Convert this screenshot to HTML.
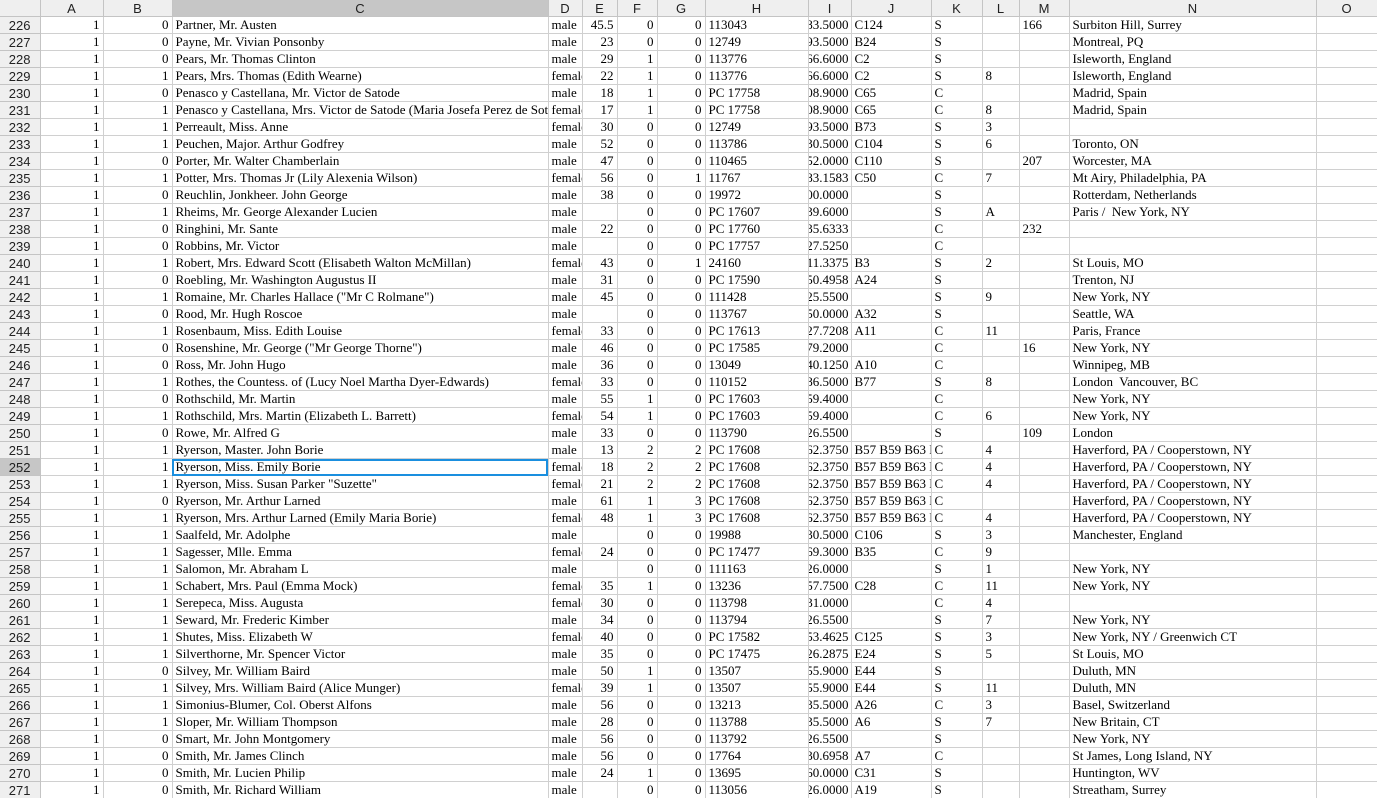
<!DOCTYPE html>
<html><head><meta charset="utf-8"><style>
html,body{margin:0;padding:0;background:#fff;width:1377px;height:798px;overflow:hidden}
table{border-collapse:collapse;table-layout:fixed;width:1377px}
td,th{height:16px;padding:0 3px;border-right:1px solid #d0d0d0;border-bottom:1px solid #d0d0d0;white-space:nowrap;overflow:hidden;line-height:16px}
td{font:13px "Liberation Serif",serif;color:#000}
th{font:13px "Liberation Sans",sans-serif;background:#efefef;color:#222;font-weight:normal;text-align:center;border-color:#c4c4c4}
tbody th{text-align:right;padding-right:9px}
td.r{text-align:right}
td.i{padding:0 2px 0 0}
td.i p{margin:0;display:flex;justify-content:flex-end;overflow:hidden}
th.s{background:#c6c6c6}
td.sel{outline:2px solid #1a8fdf;outline-offset:-2px}
</style></head><body>
<table>
<colgroup><col style="width:40px"><col style="width:63px"><col style="width:69px"><col style="width:376px"><col style="width:34px"><col style="width:35px"><col style="width:40px"><col style="width:48px"><col style="width:103px"><col style="width:43px"><col style="width:80px"><col style="width:51px"><col style="width:37px"><col style="width:50px"><col style="width:247px"><col style="width:61px"></colgroup>
<thead><tr><th></th><th>A</th><th>B</th><th class="s">C</th><th>D</th><th>E</th><th>F</th><th>G</th><th>H</th><th>I</th><th>J</th><th>K</th><th>L</th><th>M</th><th>N</th><th>O</th></tr></thead>
<tbody>
<tr><th>226<td class=r>1<td class=r>0<td>Partner, Mr. Austen<td>male<td class=r>45.5<td class=r>0<td class=r>0<td>113043<td class=i><p>83.5000</p><td>C124<td>S<td><td>166<td>Surbiton Hill, Surrey<td></tr>
<tr><th>227<td class=r>1<td class=r>0<td>Payne, Mr. Vivian Ponsonby<td>male<td class=r>23<td class=r>0<td class=r>0<td>12749<td class=i><p>93.5000</p><td>B24<td>S<td><td><td>Montreal, PQ<td></tr>
<tr><th>228<td class=r>1<td class=r>0<td>Pears, Mr. Thomas Clinton<td>male<td class=r>29<td class=r>1<td class=r>0<td>113776<td class=i><p>66.6000</p><td>C2<td>S<td><td><td>Isleworth, England<td></tr>
<tr><th>229<td class=r>1<td class=r>1<td>Pears, Mrs. Thomas (Edith Wearne)<td>female<td class=r>22<td class=r>1<td class=r>0<td>113776<td class=i><p>66.6000</p><td>C2<td>S<td>8<td><td>Isleworth, England<td></tr>
<tr><th>230<td class=r>1<td class=r>0<td>Penasco y Castellana, Mr. Victor de Satode<td>male<td class=r>18<td class=r>1<td class=r>0<td>PC 17758<td class=i><p>08.9000</p><td>C65<td>C<td><td><td>Madrid, Spain<td></tr>
<tr><th>231<td class=r>1<td class=r>1<td>Penasco y Castellana, Mrs. Victor de Satode (Maria Josefa Perez de Soto y Vallejo)<td>female<td class=r>17<td class=r>1<td class=r>0<td>PC 17758<td class=i><p>08.9000</p><td>C65<td>C<td>8<td><td>Madrid, Spain<td></tr>
<tr><th>232<td class=r>1<td class=r>1<td>Perreault, Miss. Anne<td>female<td class=r>30<td class=r>0<td class=r>0<td>12749<td class=i><p>93.5000</p><td>B73<td>S<td>3<td><td><td></tr>
<tr><th>233<td class=r>1<td class=r>1<td>Peuchen, Major. Arthur Godfrey<td>male<td class=r>52<td class=r>0<td class=r>0<td>113786<td class=i><p>30.5000</p><td>C104<td>S<td>6<td><td>Toronto, ON<td></tr>
<tr><th>234<td class=r>1<td class=r>0<td>Porter, Mr. Walter Chamberlain<td>male<td class=r>47<td class=r>0<td class=r>0<td>110465<td class=i><p>52.0000</p><td>C110<td>S<td><td>207<td>Worcester, MA<td></tr>
<tr><th>235<td class=r>1<td class=r>1<td>Potter, Mrs. Thomas Jr (Lily Alexenia Wilson)<td>female<td class=r>56<td class=r>0<td class=r>1<td>11767<td class=i><p>83.1583</p><td>C50<td>C<td>7<td><td>Mt Airy, Philadelphia, PA<td></tr>
<tr><th>236<td class=r>1<td class=r>0<td>Reuchlin, Jonkheer. John George<td>male<td class=r>38<td class=r>0<td class=r>0<td>19972<td class=i><p>00.0000</p><td><td>S<td><td><td>Rotterdam, Netherlands<td></tr>
<tr><th>237<td class=r>1<td class=r>1<td>Rheims, Mr. George Alexander Lucien<td>male<td class=r><td class=r>0<td class=r>0<td>PC 17607<td class=i><p>39.6000</p><td><td>S<td>A<td><td>Paris /&nbsp; New York, NY<td></tr>
<tr><th>238<td class=r>1<td class=r>0<td>Ringhini, Mr. Sante<td>male<td class=r>22<td class=r>0<td class=r>0<td>PC 17760<td class=i><p>35.6333</p><td><td>C<td><td>232<td><td></tr>
<tr><th>239<td class=r>1<td class=r>0<td>Robbins, Mr. Victor<td>male<td class=r><td class=r>0<td class=r>0<td>PC 17757<td class=i><p>27.5250</p><td><td>C<td><td><td><td></tr>
<tr><th>240<td class=r>1<td class=r>1<td>Robert, Mrs. Edward Scott (Elisabeth Walton McMillan)<td>female<td class=r>43<td class=r>0<td class=r>1<td>24160<td class=i><p>11.3375</p><td>B3<td>S<td>2<td><td>St Louis, MO<td></tr>
<tr><th>241<td class=r>1<td class=r>0<td>Roebling, Mr. Washington Augustus II<td>male<td class=r>31<td class=r>0<td class=r>0<td>PC 17590<td class=i><p>50.4958</p><td>A24<td>S<td><td><td>Trenton, NJ<td></tr>
<tr><th>242<td class=r>1<td class=r>1<td>Romaine, Mr. Charles Hallace ("Mr C Rolmane")<td>male<td class=r>45<td class=r>0<td class=r>0<td>111428<td class=i><p>25.5500</p><td><td>S<td>9<td><td>New York, NY<td></tr>
<tr><th>243<td class=r>1<td class=r>0<td>Rood, Mr. Hugh Roscoe<td>male<td class=r><td class=r>0<td class=r>0<td>113767<td class=i><p>50.0000</p><td>A32<td>S<td><td><td>Seattle, WA<td></tr>
<tr><th>244<td class=r>1<td class=r>1<td>Rosenbaum, Miss. Edith Louise<td>female<td class=r>33<td class=r>0<td class=r>0<td>PC 17613<td class=i><p>27.7208</p><td>A11<td>C<td>11<td><td>Paris, France<td></tr>
<tr><th>245<td class=r>1<td class=r>0<td>Rosenshine, Mr. George ("Mr George Thorne")<td>male<td class=r>46<td class=r>0<td class=r>0<td>PC 17585<td class=i><p>79.2000</p><td><td>C<td><td>16<td>New York, NY<td></tr>
<tr><th>246<td class=r>1<td class=r>0<td>Ross, Mr. John Hugo<td>male<td class=r>36<td class=r>0<td class=r>0<td>13049<td class=i><p>40.1250</p><td>A10<td>C<td><td><td>Winnipeg, MB<td></tr>
<tr><th>247<td class=r>1<td class=r>1<td>Rothes, the Countess. of (Lucy Noel Martha Dyer-Edwards)<td>female<td class=r>33<td class=r>0<td class=r>0<td>110152<td class=i><p>86.5000</p><td>B77<td>S<td>8<td><td>London&nbsp; Vancouver, BC<td></tr>
<tr><th>248<td class=r>1<td class=r>0<td>Rothschild, Mr. Martin<td>male<td class=r>55<td class=r>1<td class=r>0<td>PC 17603<td class=i><p>59.4000</p><td><td>C<td><td><td>New York, NY<td></tr>
<tr><th>249<td class=r>1<td class=r>1<td>Rothschild, Mrs. Martin (Elizabeth L. Barrett)<td>female<td class=r>54<td class=r>1<td class=r>0<td>PC 17603<td class=i><p>59.4000</p><td><td>C<td>6<td><td>New York, NY<td></tr>
<tr><th>250<td class=r>1<td class=r>0<td>Rowe, Mr. Alfred G<td>male<td class=r>33<td class=r>0<td class=r>0<td>113790<td class=i><p>26.5500</p><td><td>S<td><td>109<td>London<td></tr>
<tr><th>251<td class=r>1<td class=r>1<td>Ryerson, Master. John Borie<td>male<td class=r>13<td class=r>2<td class=r>2<td>PC 17608<td class=i><p>62.3750</p><td>B57 B59 B63 B66<td>C<td>4<td><td>Haverford, PA / Cooperstown, NY<td></tr>
<tr><th class="s">252<td class=r>1<td class=r>1<td class="sel">Ryerson, Miss. Emily Borie<td>female<td class=r>18<td class=r>2<td class=r>2<td>PC 17608<td class=i><p>62.3750</p><td>B57 B59 B63 B66<td>C<td>4<td><td>Haverford, PA / Cooperstown, NY<td></tr>
<tr><th>253<td class=r>1<td class=r>1<td>Ryerson, Miss. Susan Parker "Suzette"<td>female<td class=r>21<td class=r>2<td class=r>2<td>PC 17608<td class=i><p>62.3750</p><td>B57 B59 B63 B66<td>C<td>4<td><td>Haverford, PA / Cooperstown, NY<td></tr>
<tr><th>254<td class=r>1<td class=r>0<td>Ryerson, Mr. Arthur Larned<td>male<td class=r>61<td class=r>1<td class=r>3<td>PC 17608<td class=i><p>62.3750</p><td>B57 B59 B63 B66<td>C<td><td><td>Haverford, PA / Cooperstown, NY<td></tr>
<tr><th>255<td class=r>1<td class=r>1<td>Ryerson, Mrs. Arthur Larned (Emily Maria Borie)<td>female<td class=r>48<td class=r>1<td class=r>3<td>PC 17608<td class=i><p>62.3750</p><td>B57 B59 B63 B66<td>C<td>4<td><td>Haverford, PA / Cooperstown, NY<td></tr>
<tr><th>256<td class=r>1<td class=r>1<td>Saalfeld, Mr. Adolphe<td>male<td class=r><td class=r>0<td class=r>0<td>19988<td class=i><p>30.5000</p><td>C106<td>S<td>3<td><td>Manchester, England<td></tr>
<tr><th>257<td class=r>1<td class=r>1<td>Sagesser, Mlle. Emma<td>female<td class=r>24<td class=r>0<td class=r>0<td>PC 17477<td class=i><p>69.3000</p><td>B35<td>C<td>9<td><td><td></tr>
<tr><th>258<td class=r>1<td class=r>1<td>Salomon, Mr. Abraham L<td>male<td class=r><td class=r>0<td class=r>0<td>111163<td class=i><p>26.0000</p><td><td>S<td>1<td><td>New York, NY<td></tr>
<tr><th>259<td class=r>1<td class=r>1<td>Schabert, Mrs. Paul (Emma Mock)<td>female<td class=r>35<td class=r>1<td class=r>0<td>13236<td class=i><p>57.7500</p><td>C28<td>C<td>11<td><td>New York, NY<td></tr>
<tr><th>260<td class=r>1<td class=r>1<td>Serepeca, Miss. Augusta<td>female<td class=r>30<td class=r>0<td class=r>0<td>113798<td class=i><p>31.0000</p><td><td>C<td>4<td><td><td></tr>
<tr><th>261<td class=r>1<td class=r>1<td>Seward, Mr. Frederic Kimber<td>male<td class=r>34<td class=r>0<td class=r>0<td>113794<td class=i><p>26.5500</p><td><td>S<td>7<td><td>New York, NY<td></tr>
<tr><th>262<td class=r>1<td class=r>1<td>Shutes, Miss. Elizabeth W<td>female<td class=r>40<td class=r>0<td class=r>0<td>PC 17582<td class=i><p>53.4625</p><td>C125<td>S<td>3<td><td>New York, NY / Greenwich CT<td></tr>
<tr><th>263<td class=r>1<td class=r>1<td>Silverthorne, Mr. Spencer Victor<td>male<td class=r>35<td class=r>0<td class=r>0<td>PC 17475<td class=i><p>26.2875</p><td>E24<td>S<td>5<td><td>St Louis, MO<td></tr>
<tr><th>264<td class=r>1<td class=r>0<td>Silvey, Mr. William Baird<td>male<td class=r>50<td class=r>1<td class=r>0<td>13507<td class=i><p>55.9000</p><td>E44<td>S<td><td><td>Duluth, MN<td></tr>
<tr><th>265<td class=r>1<td class=r>1<td>Silvey, Mrs. William Baird (Alice Munger)<td>female<td class=r>39<td class=r>1<td class=r>0<td>13507<td class=i><p>55.9000</p><td>E44<td>S<td>11<td><td>Duluth, MN<td></tr>
<tr><th>266<td class=r>1<td class=r>1<td>Simonius-Blumer, Col. Oberst Alfons<td>male<td class=r>56<td class=r>0<td class=r>0<td>13213<td class=i><p>35.5000</p><td>A26<td>C<td>3<td><td>Basel, Switzerland<td></tr>
<tr><th>267<td class=r>1<td class=r>1<td>Sloper, Mr. William Thompson<td>male<td class=r>28<td class=r>0<td class=r>0<td>113788<td class=i><p>35.5000</p><td>A6<td>S<td>7<td><td>New Britain, CT<td></tr>
<tr><th>268<td class=r>1<td class=r>0<td>Smart, Mr. John Montgomery<td>male<td class=r>56<td class=r>0<td class=r>0<td>113792<td class=i><p>26.5500</p><td><td>S<td><td><td>New York, NY<td></tr>
<tr><th>269<td class=r>1<td class=r>0<td>Smith, Mr. James Clinch<td>male<td class=r>56<td class=r>0<td class=r>0<td>17764<td class=i><p>30.6958</p><td>A7<td>C<td><td><td>St James, Long Island, NY<td></tr>
<tr><th>270<td class=r>1<td class=r>0<td>Smith, Mr. Lucien Philip<td>male<td class=r>24<td class=r>1<td class=r>0<td>13695<td class=i><p>60.0000</p><td>C31<td>S<td><td><td>Huntington, WV<td></tr>
<tr><th>271<td class=r>1<td class=r>0<td>Smith, Mr. Richard William<td>male<td class=r><td class=r>0<td class=r>0<td>113056<td class=i><p>26.0000</p><td>A19<td>S<td><td><td>Streatham, Surrey<td></tr>
</tbody></table>
</body></html>
